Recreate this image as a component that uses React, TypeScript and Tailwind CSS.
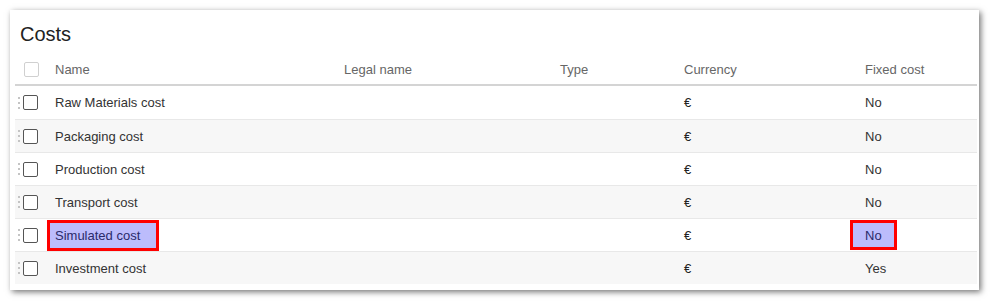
import React from "react";

type Row = { name: string; currency: string; fixed: string; mark?: boolean };

const rows: Row[] = [
  { name: "Raw Materials cost", currency: "€", fixed: "No" },
  { name: "Packaging cost", currency: "€", fixed: "No" },
  { name: "Production cost", currency: "€", fixed: "No" },
  { name: "Transport cost", currency: "€", fixed: "No" },
  { name: "Simulated cost", currency: "€", fixed: "No", mark: true },
  { name: "Investment cost", currency: "€", fixed: "Yes" },
];

const cols = "grid grid-cols-[32px_289px_216px_124px_181px_1fr]";

function DragHandle() {
  return (
    <svg width="2" height="12" viewBox="0 0 2 12" className="ml-[3px] shrink-0">
      <rect x="0" y="0" width="2" height="2" fill="#c4c4c4" />
      <rect x="0" y="5" width="2" height="2" fill="#c4c4c4" />
      <rect x="0" y="10" width="2" height="2" fill="#c4c4c4" />
    </svg>
  );
}

export default function App() {
  return (
    <div className="w-[995px] h-[306px] bg-white pt-[10px] pl-[10px] font-['Liberation_Sans',Arial,sans-serif]">
      <div className="w-[969px] h-[280px] bg-white shadow-[2px_2px_6px_rgba(0,0,0,0.55)] pl-[5px] pr-[2px]">
        <h1 className="pt-[13px] pl-[5px] text-[20px] leading-[23px] text-[#222] mb-[9px]">
          Costs
        </h1>
        <div className={`${cols} h-[31px] border-b-2 border-[#d4d4d4] text-[13px] leading-[15px] text-[#666] items-center`}>
          <div className="pl-[9px] flex items-center">
            <span className="w-[15px] h-[15px] rounded-[2px] border border-[#d0d0d0] bg-white" />
          </div>
          <div className="pl-2">Name</div>
          <div className="pl-2">Legal name</div>
          <div className="pl-2">Type</div>
          <div className="pl-2">Currency</div>
          <div className="pl-2">Fixed cost</div>
        </div>
        {rows.map((r, i) => (
          <div
            key={r.name}
            className={`${cols} h-[33px] items-center text-[13px] leading-[15px] text-[#333] ${
              i > 0 ? "border-t border-[#e8e8e8]" : ""
            } ${i % 2 === 1 ? "bg-[#f7f7f7]" : "bg-white"}`}
          >
            <div className="flex items-center">
              <DragHandle />
              <span className="ml-[3px] w-[15px] h-[15px] rounded-[2px] border border-[#555] bg-white" />
            </div>
            <div className="pl-2">
              {r.mark ? (
                <span className="inline-flex items-center h-[31px] -ml-[8px] pl-[5px] pr-[16px] border-[3px] border-[#f00] bg-[#bcbcfc] text-[#2a2a6a]">
                  {r.name}
                </span>
              ) : (
                r.name
              )}
            </div>
            <div className="pl-2" />
            <div className="pl-2" />
            <div className="pl-2 text-[#222]">{r.currency}</div>
            <div className="pl-2">
              {r.mark ? (
                <span className="inline-flex items-center h-[30px] -ml-[15px] pl-[12px] pr-[12px] border-[3px] border-[#f00] bg-[#bcbcfc] text-[#2a2a6a]">
                  {r.fixed}
                </span>
              ) : (
                r.fixed
              )}
            </div>
          </div>
        ))}
      </div>
    </div>
  );
}
